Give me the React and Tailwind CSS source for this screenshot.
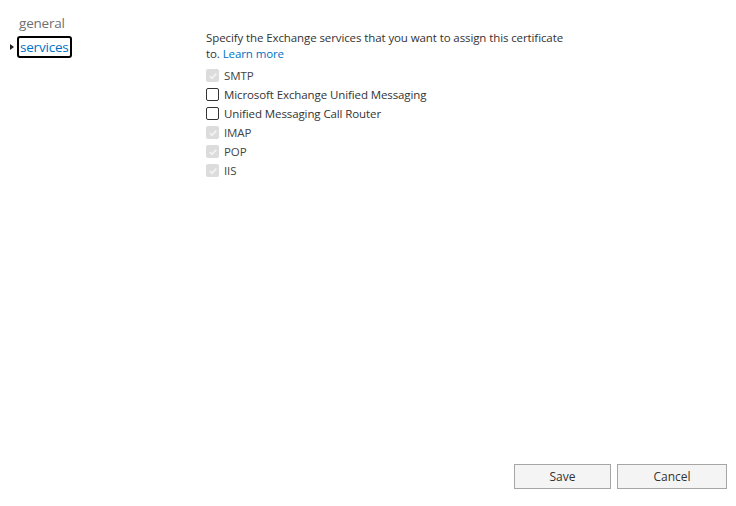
import React from "react";

function Box({ checked }) {
  if (checked) {
    return (
      <span className="flex h-[13px] w-[13px] shrink-0 items-center justify-center rounded-[2px] bg-[#dcdcdc]">
        <svg width="10" height="10" viewBox="0 0 10 10">
          <path d="M1.8 5.2 L4 7.3 L8.3 2.6" fill="none" stroke="#f2f2f2" strokeWidth="1.8" />
        </svg>
      </span>
    );
  }
  return <span className="block h-[13px] w-[13px] shrink-0 rounded-[2px] border border-[#333] bg-white" />;
}

const items = [
  ["SMTP", true],
  ["Microsoft Exchange Unified Messaging", false],
  ["Unified Messaging Call Router", false],
  ["IMAP", true],
  ["POP", true],
  ["IIS", true],
];

export default function App() {
  return (
    <div className="relative flex h-[506px] w-[736px] flex-col bg-white font-['Open_Sans',sans-serif] text-[#333]">
      <div className="flex flex-1">
        <div className="w-[206px] shrink-0 pt-[13px]">
          <div className="pl-[19px] text-[13.5px] leading-[20px] tracking-[-0.2px] text-[#707070]">general</div>
          <div className="mt-[3px] flex items-center">
            <svg width="10" height="10" viewBox="0 0 10 10" className="ml-[7px] mr-0">
              <path d="M3 2 L7 5 L3 8 Z" fill="#222" />
            </svg>
            <span className="rounded-[3px] border-2 border-black px-[1px] text-[13.5px] leading-[18px] tracking-[-0.2px] text-[#0072c6]">
              services
            </span>
          </div>
        </div>
        <div className="pt-[30px]">
          <p className="w-[366px] text-[11.5px] leading-[16px] tracking-[-0.1px]">
            Specify the Exchange services that you want to assign this certificate to.{" "}
            <a className="text-[#0072c6]">Learn more</a>
          </p>
          <div className="mt-[4px] flex flex-col">
            {items.map(([label, c]) => (
              <label key={label} className="flex h-[19px] items-center gap-[5px] text-[11.5px] tracking-[-0.1px]">
                <Box checked={c} />
                <span className={c ? "text-[#444]" : ""}>{label}</span>
              </label>
            ))}
          </div>
        </div>
      </div>
      <div className="flex justify-end gap-[6px] pb-[17px] pr-[9px]">
        <button className="h-[25px] w-[97px] border border-[#a6a6a6] bg-[#f4f4f4] text-[12px] text-[#333]">Save</button>
        <button className="h-[25px] w-[110px] border border-[#a6a6a6] bg-[#f4f4f4] text-[12px] text-[#333]">Cancel</button>
      </div>
    </div>
  );
}
